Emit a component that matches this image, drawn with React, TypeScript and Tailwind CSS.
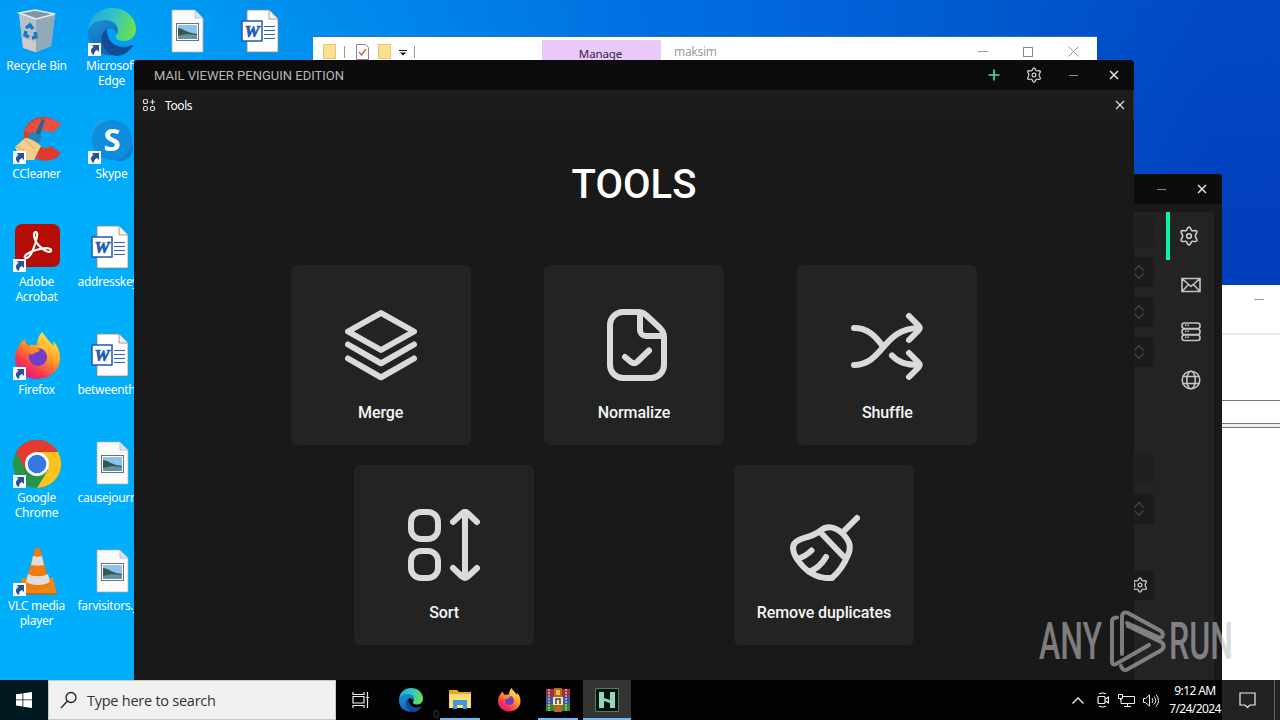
import type { ReactNode } from "react";

type IconProps = { size?: number };

const WINDOW_FONT = "font-[Noto_Sans,Open_Sans,sans-serif]";

/* ---------- desktop icons ---------- */

const EdgeIcon = ({ size = 48 }: IconProps) => (
  <svg width={size} height={size} viewBox="0 0 48 48">
    <defs>
      <linearGradient id="edgeTop" x1="0" y1="0.3" x2="1" y2="0.5">
        <stop offset="0" stopColor="#2aa5dc" />
        <stop offset="0.5" stopColor="#30c4c4" />
        <stop offset="1" stopColor="#6fe04b" />
      </linearGradient>
      <linearGradient id="edgeLeft" x1="0" y1="0" x2="0.5" y2="1">
        <stop offset="0" stopColor="#1b93d8" />
        <stop offset="1" stopColor="#1164b8" />
      </linearGradient>
    </defs>
    <path
      d="M0 23C1 9 11 0 24 0c14 0 24 10 24 21 0 8-6 12-12 12-7 0-9-3-8-5 5-8-2-15-10-15C9 13 2 17 0 23Z"
      fill="url(#edgeTop)"
    />
    <path
      d="M0 24c1-8 9-12 17-12 9 0 15 7 12 14-2-4-6-6-9-5-8 3-8 20 6 26C11 49 0 39 0 24Z"
      fill="url(#edgeLeft)"
    />
    <path
      d="M19 21c-10 6-6 24 9 27 7 0 13-4 17-10 0-1-1-1-1-1-14 6-26-3-25-16Z"
      fill="#154a94"
    />
  </svg>
);

const RecycleBinIcon = () => (
  <svg width="48" height="48" viewBox="0 0 48 48">
    <path d="m6 5 16-3 20 4-4 32-15 6-13-4Z" fill="#c3d1da" />
    <path d="m6 5 17 6v33l-13-4Z" fill="#b4c2cc" />
    <path d="m23 11 19-5-4 32-15 6Z" fill="#93a9b8" />
    <path d="m9 30 14 4v10l-12-4Z" fill="#d1cbc8" />
    <path d="m6 5 16-3 20 4-19 5Z" fill="#7d98a9" stroke="#e4edf3" strokeWidth="1.4" />
    <g fill="none" stroke="#1677c5" strokeWidth="3.4">
      <path d="m13 20 4-3 3 4" />
      <path d="m22 24 1 5-4 1" />
      <path d="m16 29-4-2 1-4" />
    </g>
  </svg>
);

const CCleanerIcon = () => (
  <svg width="48" height="48" viewBox="0 0 48 48">
    <path
      d="M48 9C35-5 14 1 11 16c-4 17 10 32 27 28 5-1 8-4 10-7l-10-7c-5 4-13 2-14-6-1-9 9-13 15-7Z"
      fill="#df3b2c"
    />
    <path d="M48 9C37-3 17 1 12 15l12 5c3-5 10-7 15-3Z" fill="#ec5947" opacity=".7" />
    <path d="m29 3 3 1-6 18-5-2Z" fill="#1e6597" />
    <path d="M16 18c4-3 10-2 13 4l-4 6-12-5Z" fill="#2a82b8" />
    <path d="M12 22c6 0 11 4 16 8l-7 14H8L2 31Z" fill="#f2ce8d" />
    <path d="m3 31 8 3m1-10 10 9" stroke="#d9a965" fill="none" />
  </svg>
);

const SkypeIcon = () => (
  <svg width="48" height="48" viewBox="0 0 48 48">
    <circle cx="17" cy="17" r="14" fill="#1ba3e6" />
    <circle cx="32" cy="32" r="13" fill="#0a80d4" />
    <circle cx="24" cy="24" r="20" fill="#0f8ddc" />
    <text
      x="24"
      y="35"
      textAnchor="middle"
      fill="#fff"
      fontFamily="Open Sans, sans-serif"
      fontSize="31"
      fontWeight="700"
    >
      S
    </text>
  </svg>
);

const AcrobatIcon = () => (
  <svg width="48" height="48" viewBox="0 0 48 48">
    <rect x="2" width="45" height="43" rx="7" fill="#b50d05" />
    <path
      d="M13 34c-4-1 2-6 10-8 10-3 16-2 15 1-3 4-17-7-17-16 0-4 4-4 3 1-1 9-7 23-11 22Z"
      fill="none"
      stroke="#fff"
      strokeWidth="2.2"
    />
  </svg>
);

const FirefoxIcon = ({ size = 48 }: IconProps) => (
  <svg width={size} height={size} viewBox="0 0 48 48">
    <defs>
      <linearGradient id="foxBody" x1="0.8" y1="0.1" x2="0.25" y2="0.95">
        <stop offset="0" stopColor="#ffe63f" />
        <stop offset="0.4" stopColor="#ff9a28" />
        <stop offset="0.75" stopColor="#fb3a4e" />
        <stop offset="1" stopColor="#df1784" />
      </linearGradient>
    </defs>
    <path
      d="M29 0c-4 5-5 9-5 13-4 0-7-1-8 1-2-1-4-4-4-7-5 3-10 12-10 19 0 12 10 21 22 21 13 0 23-9 23-21 0-7-3-13-7-17l1 5C38 11 33 6 29 0Z"
      fill="url(#foxBody)"
    />
    <circle cx="25" cy="25" r="9" fill="#713ccb" />
    <path d="M15 17c4-3 9-2 12 1-2 3-6 2-8 5-2-1-3-3-4-6Z" fill="#ff8b26" />
    <path d="M25 16c5-2 10 2 10 8 2-5 0-11-6-13Z" fill="#ffbd38" />
  </svg>
);

const ChromeIcon = () => (
  <svg width="48" height="48" viewBox="0 0 48 48">
    <circle cx="24" cy="24" r="24" fill="#2a9446" />
    <path d="M3 12a24 24 0 0 1 42 0H24L13 30Z" fill="#e33b2e" />
    <path d="M24 12h21a24 24 0 0 1-21 36l11-18Z" fill="#fcc31e" />
    <circle cx="24" cy="24" r="12" fill="#fff" />
    <circle cx="24" cy="24" r="9.3" fill="#3777e4" />
  </svg>
);

const VlcIcon = () => (
  <svg width="48" height="48" viewBox="0 0 48 48">
    <path d="M9 30h31l4 15H6Z" fill="#f08613" />
    <path d="M6 45h38v1.500H6Z" fill="#cc6200" />
    <path d="M22 1c1-2 4-2 5 0l10 36c-5 6-20 6-25 0Z" fill="#ef7c0c" />
    <path d="m20 8-2 9c4 1 9 1 13 0l-2-9c-3 1-6 1-9 0Zm-5 18-2 8c6 4 18 4 24 0l-2-8c-5 3-15 3-20 0Z" fill="#dedede" />
  </svg>
);

const ImageFileIcon = () => (
  <svg width="48" height="48" viewBox="0 0 48 48">
    <path d="M9 2h23l8 8v34H9Z" fill="#fafafa" stroke="#b5b0ac" strokeWidth=".7" />
    <path d="M32 2v8h8Z" fill="#d7e7f2" stroke="#aab6bd" strokeWidth=".7" />
    <rect x="13.500" y="15.500" width="22" height="17" fill="#fff" stroke="#66737c" />
    <path d="M15 17h19v14H15Z" fill="#8cc3ea" />
    <path d="M15 20c5 0 6 4 19 6v5H15Z" fill="#34594f" />
    <path d="M15 28c7-2 12-2 19-1v4H15Z" fill="#6791a5" />
  </svg>
);

const WordFileIcon = () => (
  <svg width="48" height="48" viewBox="0 0 48 48">
    <path d="M9 2h22l9 9v33H9Z" fill="#fff" stroke="#8e877f" strokeWidth=".8" />
    <path d="M31 2v9h9" fill="#f3f3f3" stroke="#8e877f" strokeWidth=".8" />
    <path d="M26 18.500h11M26 22.500h11M26 26.500h11M26 30.500h11" stroke="#2765b9" strokeWidth="1.2" />
    <rect x="4" y="13" width="20" height="20" fill="#fff" stroke="#2159b5" strokeWidth="1.500" />
    <text
      x="14"
      y="28.500"
      textAnchor="middle"
      fill="#2159b5"
      stroke="#2159b5"
      strokeWidth=".7"
      fontFamily="Liberation Serif, serif"
      fontSize="17"
      fontStyle="italic"
      fontWeight="bold"
    >
      W
    </text>
  </svg>
);

const ShortcutArrow = () => (
  <svg className="absolute bottom-0 left-0" width="13" height="13" viewBox="0 0 13 13">
    <path d="M0 0h13v13H0Z" fill="#f8fbff" />
    <path d="M4 2h7v7L9 7c-2 1-3 2-3 5-4-2-4-6-.5-8Z" fill="#285297" />
  </svg>
);

type Shortcut = {
  name: string;
  icon: ReactNode;
  shortcut?: boolean;
  clipped?: boolean;
};

const columns: Shortcut[][] = [
  [
    { name: "Recycle Bin", icon: <RecycleBinIcon /> },
    { name: "CCleaner", icon: <CCleanerIcon />, shortcut: true },
    { name: "Adobe Acrobat", icon: <AcrobatIcon />, shortcut: true },
    { name: "Firefox", icon: <FirefoxIcon />, shortcut: true },
    { name: "Google Chrome", icon: <ChromeIcon />, shortcut: true },
    { name: "VLC media player", icon: <VlcIcon />, shortcut: true },
  ],
  [
    { name: "Microsoft Edge", icon: <EdgeIcon />, shortcut: true },
    { name: "Skype", icon: <SkypeIcon />, shortcut: true },
    { name: "addresskey", icon: <WordFileIcon />, clipped: true },
    { name: "betweenth", icon: <WordFileIcon />, clipped: true },
    { name: "causejourn", icon: <ImageFileIcon />, clipped: true },
    { name: "farvisitors.j", icon: <ImageFileIcon />, clipped: true },
  ],
  [{ name: "", icon: <ImageFileIcon /> }],
  [{ name: "", icon: <WordFileIcon /> }],
];

const DesktopIcon = ({ name, icon, shortcut, clipped }: Shortcut) => (
  <div className="flex h-[108px] w-[75px] flex-col items-center pt-2">
    <div className="relative size-12">
      {icon}
      {shortcut && <ShortcutArrow />}
    </div>
    <p
      className={
        clipped
          ? "mt-0.5 w-[68px] text-left text-[12px] leading-[15px] tracking-[-0.3px] whitespace-nowrap text-white"
          : "mt-0.5 w-[66px] text-center text-[12px] leading-[15px] tracking-[-0.25px] text-white"
      }
    >
      {name}
    </p>
  </div>
);

/* ---------- window glyphs ---------- */

const GearIcon = ({ size = 16 }: IconProps) => (
  <svg
    width={size}
    height={size}
    viewBox="0 0 24 24"
    fill="none"
    stroke="#d0d0d0"
    strokeWidth="1.9"
    strokeLinejoin="round"
  >
    <path d="M10.700 2q1.300-1.500 2.600 0l1.700 3q.6.800 1.700.7l3.300-.2q1.800.3 1.500 2L19.800 11q-.3 1 0 2l1.700 3.500q.3 1.700-1.500 2l-3.300-.2q-1.100-.1-1.700.7l-1.700 3q-1.300 1.500-2.600 0l-1.700-3q-.6-.8-1.700-.7l-3.300.2q-1.800-.3-1.500-2L4.200 13q.3-1 0-2L2.500 7.500q-.3-1.700 1.500-2l3.300.2q1.100.1 1.700-.7Z" />
    <circle cx="12" cy="12" r="2.800" />
  </svg>
);

const CloseIcon = ({ size = 10, width = 1.6 }: { size?: number; width?: number }) => (
  <svg width={size} height={size} viewBox="0 0 10 10" stroke="#e2e2e2" strokeWidth={width}>
    <path d="m1 1 8 8M9 1 1 9" />
  </svg>
);

const MinimizeIcon = () => <span className="mr-px h-px w-[9px] bg-[#888]" />;

const TitleButton = ({ children }: { children: ReactNode }) => (
  <button className="flex h-[30px] w-10 items-center justify-center">{children}</button>
);

/* ---------- tools ---------- */

const ToolSvg = ({ children }: { children: ReactNode }) => (
  <svg
    width="72"
    height="72"
    viewBox="0 0 72 72"
    fill="none"
    stroke="#dadada"
    strokeWidth="6"
    strokeLinecap="round"
    strokeLinejoin="round"
  >
    {children}
  </svg>
);

const tools = [
  {
    name: "Merge",
    icon: (
      <ToolSvg>
        <path d="M36 4 69 22.500 36 41 3 22.500Z" />
        <path d="m3 35.500 33 18.800 33-18.800" />
        <path d="m3 49.500 33 18.800 33-18.800" />
      </ToolSvg>
    ),
  },
  {
    name: "Normalize",
    icon: (
      <ToolSvg>
        <path d="M25 3h15c3 0 6 1 8 3l14 13c3 3 4 5 4 9v28a13 13 0 0 1-13 13H25a13 13 0 0 1-13-13V16A13 13 0 0 1 25 3Z" />
        <path d="M42 4v17a6 6 0 0 0 6 6h17M27 48l6 5q3 2.500 6 0l12-11.500" />
      </ToolSvg>
    ),
  },
  {
    name: "Shuffle",
    icon: (
      <ToolSvg>
        <path d="M3 19c13 0 21 7 29 18.500M3 56C32 56 32 19 68 19" />
        <path d="m58 7 9.500 9.500q2.500 2.500 0 5L58 31M41 46.500C47 53 54 56 68 56" />
        <path d="m58 44 9.500 9.500q2.500 2.500 0 5L58 68" />
      </ToolSvg>
    ),
  },
  {
    name: "Sort",
    icon: (
      <ToolSvg>
        <rect x="3" y="3" width="27" height="27" rx="10" />
        <rect x="3" y="42" width="27" height="27" rx="10" />
        <path d="M57 4v64M45 13l9-8.500q3-3 6 0l9 8.500M45 59l9 8.500q3 3 6 0l9-8.500" />
      </ToolSvg>
    ),
  },
  {
    name: "Remove duplicates",
    icon: (
      <ToolSvg>
        <path d="M69 9 54 24M32 22c7-6 15-4 22 2 7 7 10 13 6 22-4 10-8 16-16 23-13 1-24-5-32-15C4 44 2 35 11 31c6-3 13-3 21-9Z" />
        <path d="m34 25 22 23M9.500 50c6-2 10-4.500 14-8.500M21 62.500c8-2.500 13-7.500 17-14.500" />
      </ToolSvg>
    ),
  },
];

const ToolsWindow = () => (
  <div className="absolute top-[60px] left-[134px] flex h-[620px] w-[1000px] flex-col overflow-hidden rounded-t-[4px] bg-[#191919] font-[Roboto,sans-serif]">
    <div className="flex h-[30px] shrink-0 items-center bg-[#0c0c0c] pl-5">
      <span className="flex-1 pt-0.5 text-[13px] text-[#b8b8b8]">MAIL VIEWER PENGUIN EDITION</span>
      <TitleButton>
        <svg width="12" height="12" viewBox="0 0 12 12" stroke="#56dba6" strokeWidth="1.6">
          <path d="M6 .5v11M.5 6h11" />
        </svg>
      </TitleButton>
      <TitleButton>
        <GearIcon />
      </TitleButton>
      <TitleButton>
        <MinimizeIcon />
      </TitleButton>
      <TitleButton>
        <CloseIcon width={1.5} />
      </TitleButton>
    </div>

    <div className="flex h-[30px] shrink-0 items-center border-r border-[#303030] bg-[#1c1c1c] pr-2 pl-2">
      <svg width="14" height="14" viewBox="0 0 14 14" fill="none" stroke="#d8d8d8" strokeWidth="1.2">
        <rect x="1.500" y="1.500" width="4" height="4" rx="1.300" />
        <rect x="1.500" y="8.500" width="4" height="4" rx="1.500" />
        <rect x="8.500" y="8.500" width="4" height="4" rx="1.500" />
        <path d="M10.500 1.500v5M8 4h5" />
      </svg>
      <span className="ml-[9px] flex-1 pt-0.5 font-[Noto_Sans,sans-serif] text-[12px] tracking-[-0.4px] text-white">
        Tools
      </span>
      <CloseIcon width={1.1} />
    </div>

    <h1 className="mt-[41px] text-center text-[40px] leading-[48px] font-medium text-white">
      TOOLS
    </h1>

    <div className="mx-auto mt-[56px] flex w-[760px] flex-wrap justify-around gap-y-5">
      {tools.map(({ name, icon }) => (
        <div
          key={name}
          className="mx-[10px] flex size-[180px] flex-col items-center rounded-[6px] bg-[#232323] pt-[44px]"
        >
          {icon}
          <p className="mt-[20px] text-[16px] leading-6 font-medium tracking-[-0.1px] whitespace-nowrap text-[#f5f5f5]">
            {name}
          </p>
        </div>
      ))}
    </div>
  </div>
);

/* ---------- windows behind ---------- */

const ExplorerWindow = () => (
  <div
    className={`absolute top-[36px] left-[313px] flex h-[120px] w-[784px] items-start border-t border-[#2f74b0] bg-white ${WINDOW_FONT}`}
  >
    <div className="flex h-[29px] w-[229px] items-center pl-[10px]">
      <span className="h-[15px] w-[13px] border border-[#ecc665] bg-[#fbe08f]" />
      <span className="ml-2 h-3 w-px bg-[#999]" />
      <svg className="ml-[11px]" width="13" height="17" viewBox="0 0 13 17" fill="none">
        <path d="M.5 1.500h9l3 3v12H.5Z" stroke="#8b8290" />
        <path d="m3 9 2.500 3L10 6" stroke="#df6846" strokeWidth="1.500" />
      </svg>
      <span className="ml-[9px] h-[15px] w-[13px] border border-[#ecc665] bg-[#fbe08f]" />
      <svg className="mt-0.5 ml-2" width="8" height="6" viewBox="0 0 8 6">
        <path d="M0 0h8v1H0ZM1 2.500h6L4 5.500Z" fill="#111" />
      </svg>
      <span className="ml-[7px] h-3 w-px bg-[#999]" />
    </div>
    <div className="mt-[3px] w-[119px] bg-[#e8c9f9] pt-[6px] pb-2 pr-0.5 text-center text-[11.5px] leading-4 tracking-[-0.1px] text-[#351f44]">
      Manage
    </div>
    <span className="ml-[13px] flex-1 pt-[7px] text-[12px] leading-4 tracking-[-0.3px] text-[#9c9c9c]">
      maksim
    </span>
    <div className="flex h-[29px] items-center">
      <span className="h-px w-[10px] bg-[#999]" />
      <span className="ml-[35px] size-[10px] border border-[#888]" />
      <svg className="mr-[18px] ml-[35px]" width="11" height="11" viewBox="0 0 11 11" stroke="#999">
        <path d="m.5.5 10 10M10.500.5l-10 10" />
      </svg>
    </div>
  </div>
);

const BlankWindow = () => (
  <div className="absolute top-[285px] left-[1180px] flex h-[395px] w-[100px] flex-col bg-white">
    <span className="mt-[14px] ml-[74px] h-px w-[10px] bg-[#999]" />
    <span className="mt-[33px] h-[2px] bg-[#ececec]" />
    <span className="mt-[65px] h-px bg-[#777]" />
    <span className="mt-[22px] h-[5px] border-y border-[#777] bg-[#eee]" />
  </div>
);

const SpinField = () => (
  <div className="flex h-[30px] items-center justify-end rounded-r-[3px] bg-[#1b1b1b] pr-[10px]">
    <svg width="10" height="14" viewBox="0 0 10 14" fill="none" stroke="#454545" strokeWidth="1.2">
      <path d="m.5 5.500 4.500-5 4.500 5M.5 8.500l4.500 5 4.500-5" />
    </svg>
  </div>
);

const SettingsWindow = () => (
  <div className="absolute top-[174px] left-[1100px] flex h-[506px] w-[122px] flex-col overflow-hidden rounded-t-[4px] bg-[#191919]">
    <div className="flex h-[30px] shrink-0 justify-end bg-[#0c0c0c]">
      <TitleButton>
        <MinimizeIcon />
      </TitleButton>
      <TitleButton>
        <CloseIcon width={1.5} />
      </TitleButton>
    </div>
    <div className="mt-2 mr-2 flex flex-1 rounded-tr-[4px] bg-[#232323]">
      <div className="flex w-[65px] flex-col gap-[10px] pt-[5px] pr-[11px]">
        <div className="h-[30px] rounded-r-[3px] bg-[#202020]" />
        <SpinField />
        <SpinField />
        <SpinField />
        <div className="mt-[77px] h-[30px] rounded-r-[3px] bg-[#202020]" />
        <SpinField />
        <div className="mt-[36px] flex h-[30px] items-center justify-end rounded-r-[3px] bg-[#1b1b1b] pr-[6px]">
          <GearIcon />
        </div>
      </div>
      <div className="flex flex-1 flex-col border-l border-[#272727]">
        <div className="flex h-12 items-center border-l-4 border-[#0cf3a1] pl-[9px]">
          <GearIcon size={20} />
        </div>
        <div className="flex flex-col items-center gap-[28px] pt-[15px] pl-px">
          <svg width="20" height="20" viewBox="0 0 20 20" fill="none" stroke="#c4c4c4" strokeWidth="1.600">
            <path d="M1 3.500h18v13H1Zm0 0 9 8 9-8M1 16.500l6.500-7M19 16.500l-6.500-7" />
          </svg>
          <svg className="-mt-px" width="20" height="20" viewBox="0 0 20 20" fill="none" stroke="#c4c4c4" strokeWidth="1.600">
            <rect x="1" y="1" width="18" height="5.500" rx="2.500" />
            <rect x="1" y="7" width="18" height="5.500" rx="2.500" />
            <rect x="1" y="13" width="18" height="5.500" rx="2.500" />
            <path d="M4 3.200h5M4 9.200h5M4 15.200h5" strokeDasharray="1.500 1" />
          </svg>
          <svg width="20" height="20" viewBox="0 0 20 20" fill="none" stroke="#c4c4c4" strokeWidth="1.600">
            <circle cx="10" cy="10" r="8.800" />
            <ellipse cx="10" cy="10" rx="4.200" ry="8.800" />
            <path d="M2 6.500h16M2 13.500h16" />
          </svg>
        </div>
      </div>
    </div>
  </div>
);

/* ---------- taskbar ---------- */

const TaskButton = ({ children, state }: { children: ReactNode; state?: "open" | "active" }) => (
  <div
    className={
      state === "active"
        ? "ml-px flex h-10 w-12 items-center justify-center border-b-2 border-[#76b9ed] bg-[#343434] pt-0.5"
        : "flex h-10 w-[49px] flex-col items-center justify-between pt-2"
    }
  >
    {children}
    {state === "open" && <span className="h-0.5 w-10 bg-[#76b9ed]" />}
  </div>
);

const Taskbar = () => (
  <div
    className={`absolute bottom-0 left-0 flex h-10 w-full items-center bg-[#030303] ${WINDOW_FONT}`}
  >
    <div className="flex h-10 w-12 items-center justify-center bg-[#001820]">
      <svg width="16" height="16" viewBox="0 0 16 16" fill="#fff">
        <path d="m0 2.300 6.500-.9v6.100H0Zm7.300-1L16 0v7.500H7.300ZM0 8.300h6.500v6.200L0 13.600Zm7.300 0H16V16l-8.700-1.300Z" />
      </svg>
    </div>
    <div className="flex h-10 w-[288px] items-center border border-[#c8c8c8] bg-[#f1f1f1] pl-[11px]">
      <svg width="18" height="18" viewBox="0 0 18 18" fill="none" stroke="#222" strokeWidth="1.300">
        <circle cx="11" cy="6.500" r="5" />
        <path d="m7.500 10-6.500 7" />
      </svg>
      <span className="ml-[9px] pt-0.5 font-[Open_Sans,sans-serif] text-[14.5px] tracking-[-0.25px] text-[#333]">
        Type here to search
      </span>
    </div>
    <div className="flex w-[50px] justify-center">
      <svg width="18" height="16" viewBox="0 0 18 16" fill="none" stroke="#eee" strokeWidth="1.200">
        <path d="M1 0v2.500h11V0M1 16v-2.500h11V16M1 4.500h11v6.500H1ZM15.500 0v16M14 5.500h3" />
      </svg>
    </div>
    <TaskButton>
      <EdgeIcon size={24} />
    </TaskButton>
    <TaskButton state="open">
      <svg width="22" height="22" viewBox="0 0 22 22">
        <path d="M0 2h8l2 2h12v16H0Z" fill="#e9a91f" />
        <path d="M0 6h22v14H0Z" fill="#ffdd72" />
        <path d="M4 12h14v9h-4v-4H8v4H4Z" fill="#3c9be0" />
      </svg>
    </TaskButton>
    <TaskButton>
      <FirefoxIcon size={24} />
    </TaskButton>
    <TaskButton state="open">
      <svg width="24" height="24" viewBox="0 0 24 24">
        <path d="M0 1h24v7H0Z" fill="#a52b48" />
        <path d="M0 8h24v8H0Z" fill="#3657a8" />
        <path d="M0 16h24v7H0Z" fill="#36843e" />
        <path d="M3 1v22M20 1v22" stroke="#d4bd86" strokeWidth="1.500" strokeDasharray="2 1" />
        <path d="M8 0h8v24H8Z" fill="#b8661d" />
        <path d="M7 9h10v8H7Z" fill="#efe4c8" />
        <path d="M10 16v-5h4v5" stroke="#4d3c2b" strokeWidth="1.500" fill="none" />
        <path d="M10 2h4v5h-4Z" fill="#edc043" />
      </svg>
    </TaskButton>
    <TaskButton state="active">
      <svg width="24" height="24" viewBox="0 0 24 24">
        <path d="M.5.5h23v23H.5Z" fill="#07110e" stroke="#447f6b" />
        <path d="M4 4h5v6l6 2V4h5v16h-5v-5l-6-2v7H4Z" fill="#8fd7b5" />
      </svg>
    </TaskButton>

    <div className="ml-auto flex h-10 items-center">
      <svg width="12" height="7" viewBox="0 0 12 7" fill="none" stroke="#eee" strokeWidth="1.300">
        <path d="m.5 6.500 5.500-5.500 5.500 5.500" />
      </svg>
      <svg className="ml-[13px]" width="12" height="16" viewBox="0 0 12 16" fill="none" stroke="#eee" strokeWidth="1.200">
        <rect x="1" y="4.500" width="7" height="7" rx="1" />
        <path d="m8.500 7 3-2v6l-3-2M2 2q3.500-2 7 0M2 14q3.500 2 7 0" />
      </svg>
      <svg className="ml-[9px]" width="17" height="15" viewBox="0 0 17 15" fill="none" stroke="#eee">
        <path d="M5 3.500h11.500v7H3V6M9.500 10.500v3M6 13.500h7M.5 1.500h4v4h-4ZM2.500 5.500v2" />
      </svg>
      <svg className="ml-2" width="17" height="15" viewBox="0 0 17 15" fill="none" stroke="#eee">
        <path d="M.5 5.500h2l4-3.500v11l-4-3.500h-2ZM9 5q2 2.500 0 5M11 3.500q3.500 4 0 8M13 1.500q5 6 0 12" />
      </svg>
      <div className="ml-[8px] w-[54px] text-center text-[12px] leading-[18px] tracking-[-0.6px] whitespace-nowrap text-white">
        9:12 AM
        <br />
        7/24/2024
      </div>
      <div className="flex h-10 w-[58px] bg-[#222]">
        <div className="flex w-[53px] items-center justify-center border-r border-[#666] pr-0.5">
          <svg width="17" height="17" viewBox="0 0 17 17" fill="none" stroke="#eee" strokeWidth="1.200">
            <path d="M1 1h15v12h-5l-2.500 2.500L6 13H1Z" />
          </svg>
        </div>
      </div>
    </div>
    <span className="absolute bottom-0 left-[433px] text-[11px] leading-3 text-[#353535]">0</span>
  </div>
);

const Watermark = () => (
  <svg
    className="absolute top-[608px] left-[1036px] opacity-60"
    width="220"
    height="68"
    viewBox="0 0 220 68"
    fill="#c0c0c0"
    fontFamily="Roboto, sans-serif"
    fontSize="52"
    fontWeight="500"
  >
    <text x="3" y="51" textLength="63" lengthAdjust="spacingAndGlyphs">
      ANY
    </text>
    <text x="133" y="51" textLength="64" lengthAdjust="spacingAndGlyphs">
      RUN
    </text>
    <g fill="none" stroke="#c0c0c0" strokeWidth="4" strokeLinecap="round" strokeLinejoin="round">
      <path d="M86 46V8q1-5 6-3l33 18q3 2 1 6l-2 1-33-15" />
      <path d="M81 9.500q-5 0-5 4V53q0 5 4 3l33-19" />
      <path d="M85 58q2 6 7 3l32-18q5-3 3-7-1-2-4-3L92 18" />
    </g>
  </svg>
);

export default function App() {
  return (
    <div
      className={`relative h-[720px] w-[1280px] overflow-hidden bg-linear-to-r from-[#00aefc] from-10% via-[#0072e2] via-50% to-[#023fbc] to-95% ${WINDOW_FONT}`}
    >
      <div className="absolute inset-0 bg-linear-to-b from-[#0068dc]/25 to-transparent to-30%" />
      <div className="relative -ml-px flex">
        {columns.map((column, index) => (
          <div key={index} className="flex flex-col">
            {column.map((item, row) => (
              <DesktopIcon key={row} {...item} />
            ))}
          </div>
        ))}
      </div>
      <ExplorerWindow />
      <BlankWindow />
      <SettingsWindow />
      <ToolsWindow />
      <Taskbar />
      <Watermark />
    </div>
  );
}
